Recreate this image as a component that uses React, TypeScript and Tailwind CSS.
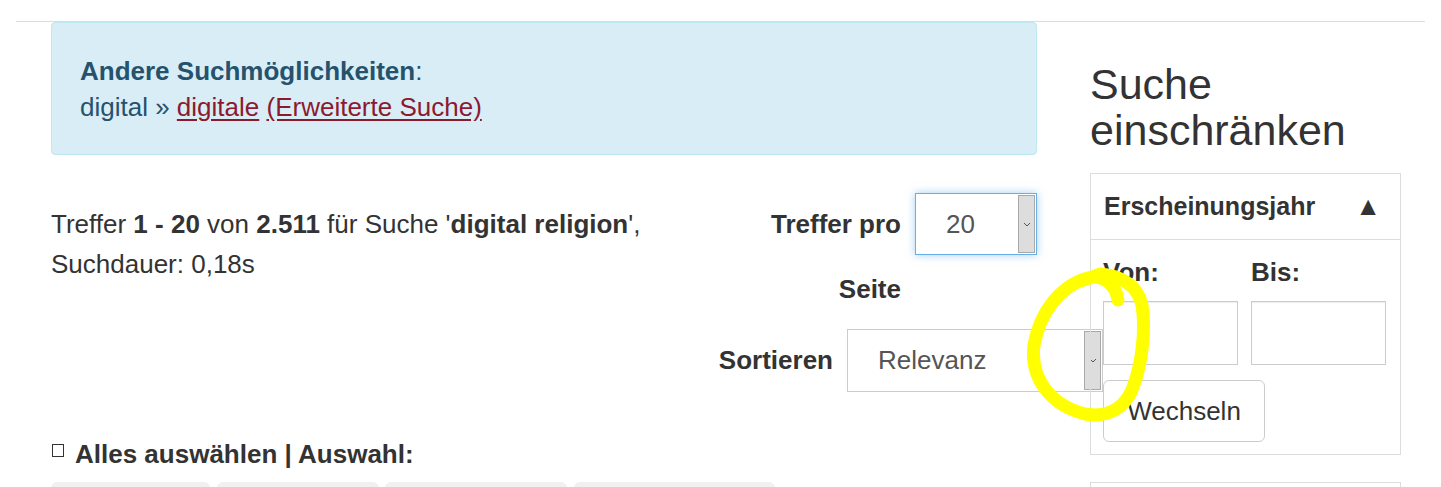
import React from 'react'

function FakeSelect({ value, width, height, focused }: { value: string; width: string; height: string; focused?: boolean }) {
  return (
    <div
      className={`${width} ${height} flex items-stretch bg-white border ${
        focused ? 'border-[#66afe9] shadow-[0_0_8px_rgba(102,175,233,0.6)]' : 'border-[#ccc]'
      }`}
    >
      <div className="flex-1 flex items-center pl-[30px] text-[26px] text-[#555]">{value}</div>
      <div className="w-[17px] my-[1px] mr-[1px] bg-[#dddddd] border border-[#a9a9a9] flex items-center justify-center">
        <svg width="8" height="5" viewBox="0 0 8 5" fill="none">
          <path d="M1 1l3 3 3-3" stroke="#555" strokeWidth="1" />
        </svg>
      </div>
    </div>
  )
}

export default function App() {
  return (
    <div className="relative w-[1441px] h-[487px] overflow-hidden bg-white text-[#333] font-['Liberation_Sans',Arial,sans-serif]">
      <div className="mx-[16px] pt-[21px]">
        <div className="border-t border-[#dddddd] flex pl-[35px]">
          {/* Main column */}
          <div className="w-[986px] flex-shrink-0">
            {/* Alert */}
            <div className="bg-[#d9edf7] border border-[#bce8f1] rounded-[4px] px-[28px] pt-[30px] pb-[29px] text-[26px] leading-[36px] text-[#25526c]">
              <div>
                <span className="font-bold">Andere Suchmöglichkeiten</span>:
              </div>
              <div>
                digital » <a className="text-[#8b1a2e] underline underline-offset-[3px]">digitale</a>{' '}
                <a className="text-[#8b1a2e] underline underline-offset-[3px]">(Erweiterte Suche)</a>
              </div>
            </div>

            {/* Results header */}
            <div className="flex items-start mt-[38px]">
              <div className="flex-1 pt-[11px] text-[26px] leading-[40px]">
                Treffer <b>1 - 20</b> von <b>2.511</b> für Suche '<b>digital religion</b>',
                <br />
                Suchdauer: 0,18s
              </div>
              <div className="flex flex-col items-end">
                <div className="flex items-start gap-[14px]">
                  <div className="text-right font-bold text-[26px]">
                    <div className="leading-[62px]">Treffer pro</div>
                    <div className="leading-[68px]">Seite</div>
                  </div>
                  <FakeSelect value="20" width="w-[122px]" height="h-[62px]" focused />
                </div>
                <div className="flex items-center gap-[14px] mt-[6px] -mr-[66px]">
                  <span className="font-bold text-[26px]">Sortieren</span>
                  <FakeSelect value="Relevanz" width="w-[256px]" height="h-[63px]" />
                </div>
              </div>
            </div>

            <div className="mt-[42px] flex items-center text-[26px] leading-[40px] font-bold">
              <span className="inline-block w-[12px] h-[13px] border border-[#333] ml-[1px] mr-[11px] -mt-[8px]" />
              Alles auswählen | Auswahl:
            </div>

            <div className="mt-[8px] flex">
              <div className="w-[159px] h-[40px] bg-[#f0f0f0] rounded-t-[6px]" />
              <div className="w-[162px] h-[40px] bg-[#f0f0f0] rounded-t-[6px] ml-[7px]" />
              <div className="w-[182px] h-[40px] bg-[#f0f0f0] rounded-t-[6px] ml-[6px]" />
              <div className="w-[201px] h-[40px] bg-[#f0f0f0] rounded-t-[6px] ml-[7px]" />
            </div>
          </div>

          {/* Sidebar */}
          <div className="w-[311px] ml-[53px] flex-shrink-0">
            <h2 className="mt-[39px] text-[43px] leading-[46px] font-normal">
              Suche
              <br />
              einschränken
            </h2>

            <div className="mt-[20px] border border-[#dddddd]">
              <div className="h-[66px] flex items-center justify-between pl-[13px] pr-[19px] border-b border-[#dddddd]">
                <span className="font-bold text-[25px]">Erscheinungsjahr</span>
                <span className="text-[26px]">▲</span>
              </div>
              <div className="px-[12px] pt-[17px] pb-[12px]">
                <div className="flex gap-[13px]">
                  <div>
                    <div className="font-bold text-[26px] leading-[30px]">Von:</div>
                    <div className="mt-[14px] w-[135px] h-[64px] border border-[#ccc] shadow-[inset_0_1px_1px_rgba(0,0,0,0.075)]" />
                  </div>
                  <div>
                    <div className="font-bold text-[26px] leading-[30px]">Bis:</div>
                    <div className="mt-[14px] w-[135px] h-[64px] border border-[#ccc] shadow-[inset_0_1px_1px_rgba(0,0,0,0.075)]" />
                  </div>
                </div>
                <button
                  type="button"
                  className="mt-[15px] w-[162px] h-[62px] border border-[#ccc] rounded-[6px] bg-white text-[26px] text-[#333]"
                >
                  Wechseln
                </button>
              </div>
            </div>

            <div className="mt-[27px] h-[40px] border border-[#dddddd]" />
          </div>
        </div>
      </div>

      {/* Hand-drawn highlight annotation */}
      <svg className="absolute left-0 top-0 pointer-events-none" width="1441" height="487" viewBox="0 0 1441 487" fill="none">
        <path
          d="M1118 300 C1116 284 1102 274 1088 278 C1060 286 1040 312 1034 345 C1030 378 1050 405 1085 414 C1108 418 1124 408 1132 390 C1142 365 1146 330 1142 305 C1138 288 1125 276 1100 274 L1084 280"
          stroke="#ffff00"
          strokeWidth="13"
          strokeLinecap="round"
          strokeLinejoin="round"
        />
      </svg>
    </div>
  )
}
